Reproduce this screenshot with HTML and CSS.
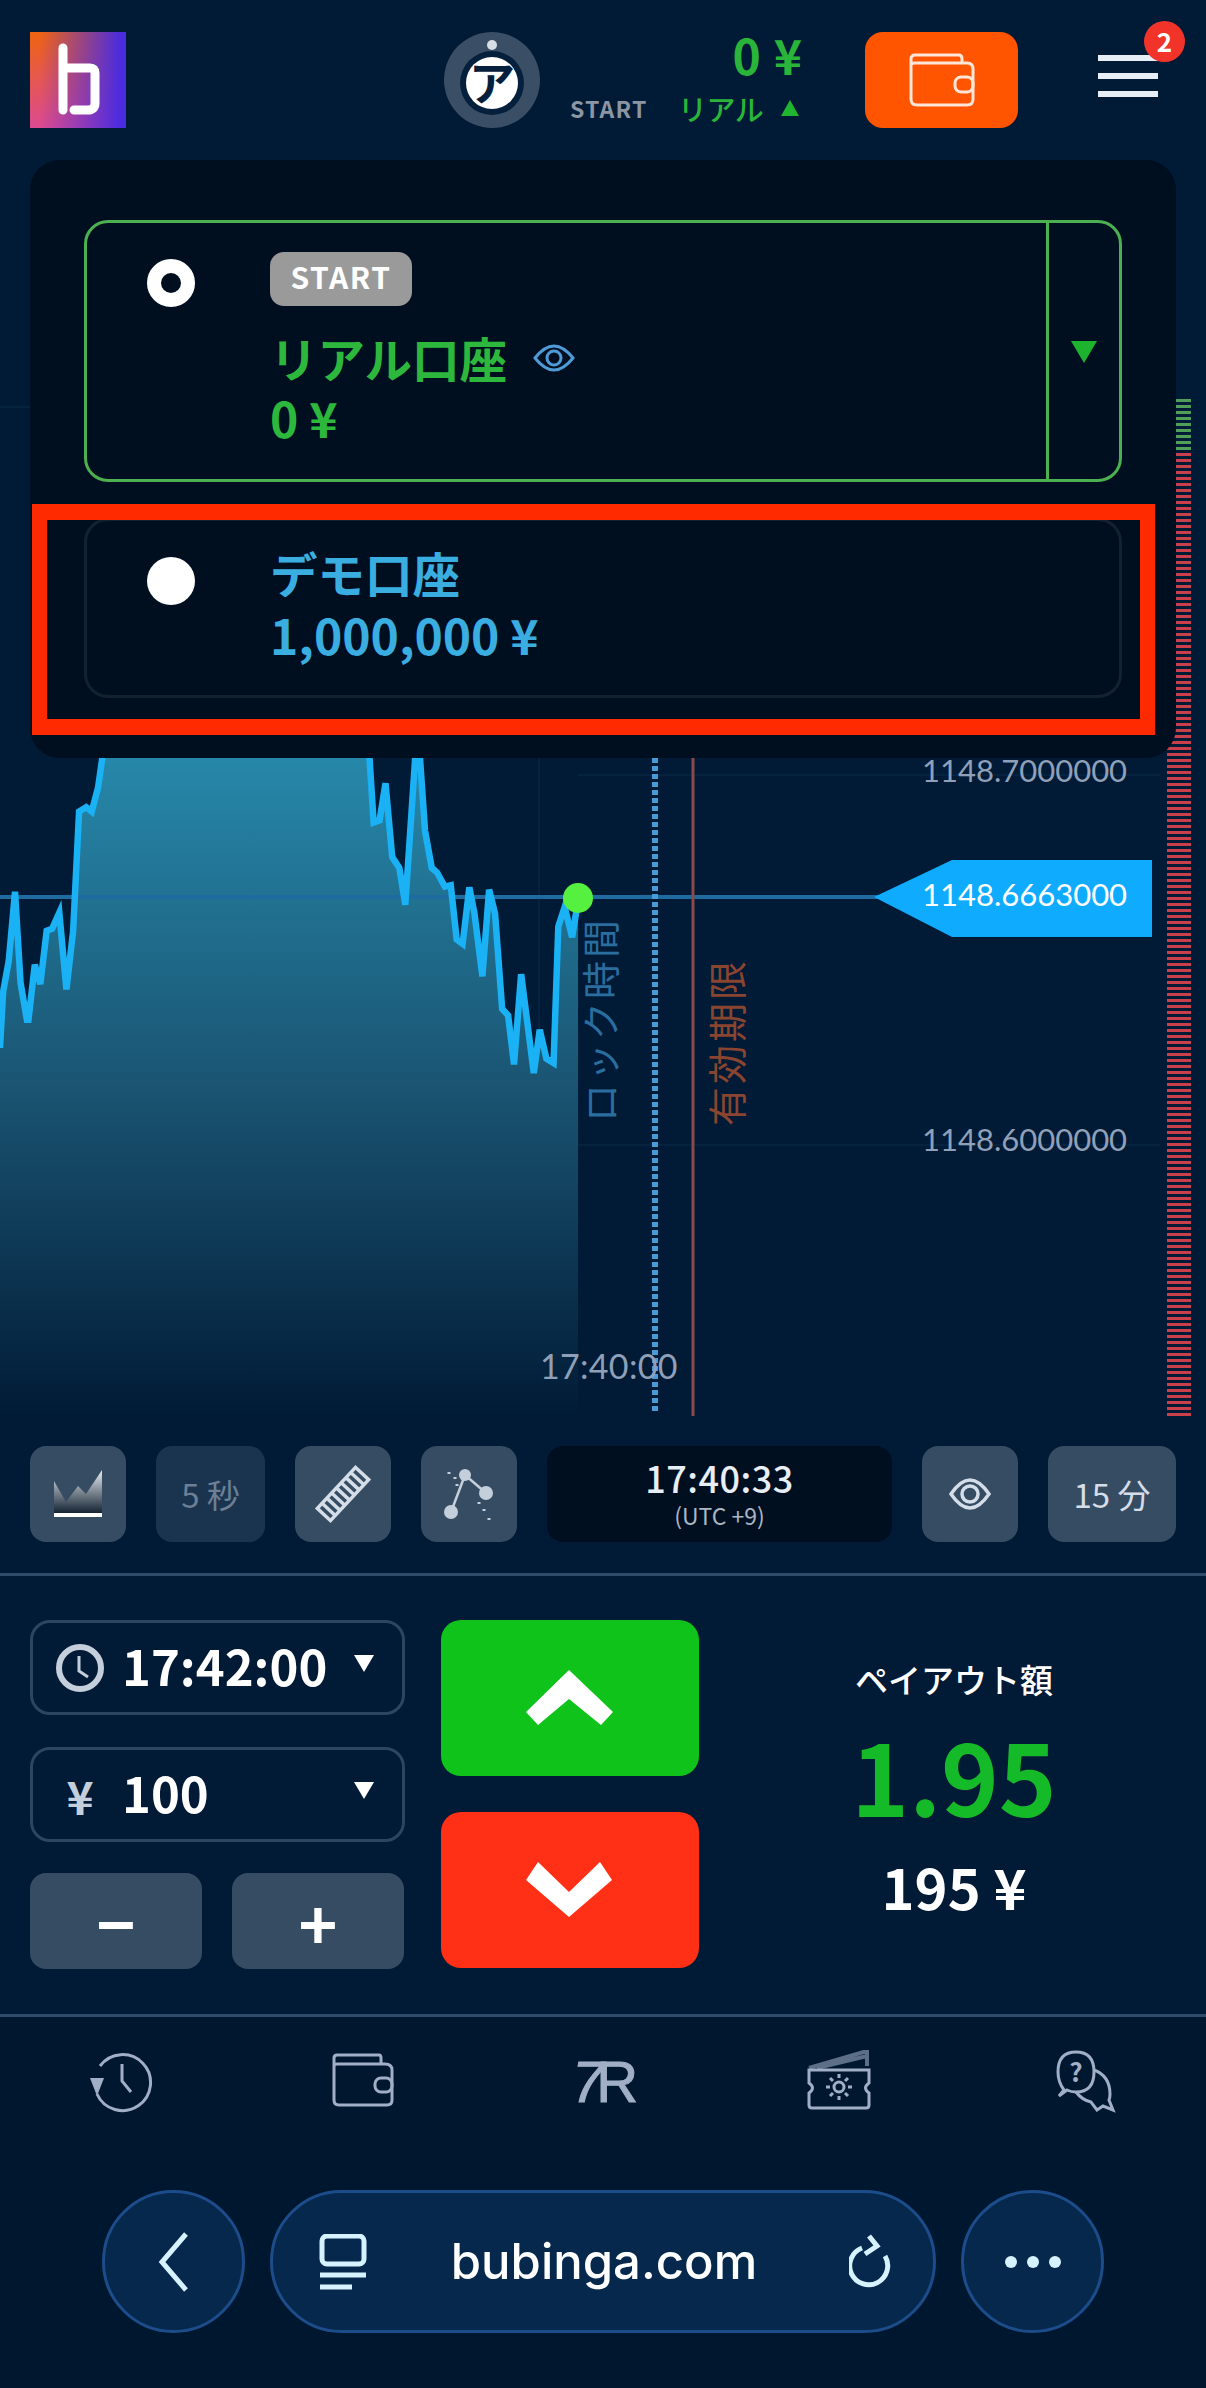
FILE: index.html
```html
<!DOCTYPE html>
<html lang="ja">
<head>
<meta charset="utf-8">
<title>bubinga</title>
<link rel="stylesheet" href="styles.css">
</head>
<body>
<header class="topbar">
  <div class="logo">
    <svg width="96" height="96" viewBox="0 0 96 96"><path class="logo-b" d="M33 16V78M33 36H60Q65 36 65 41V71Q65 78 58 78H44"/></svg>
  </div>
  <svg class="avatar" width="96" height="96" viewBox="0 0 96 96">
    <circle class="av-ring" cx="48" cy="48" r="48"/>
    <circle class="av-dot" cx="48" cy="13" r="5"/>
    <circle class="av-dark" cx="48" cy="51" r="32"/>
    <circle class="av-white" cx="48" cy="51" r="26"/>
    <text class="av-letter" x="48" y="68" text-anchor="middle">ア</text>
  </svg>
  <div class="account">
    <div class="account-amount">0 ¥</div>
    <div class="account-row">
      <span class="account-tag">START</span>
      <span class="account-kind">リアル</span>
      <span class="tri-up"></span>
    </div>
  </div>
  <button class="wallet-btn">
    <svg width="66" height="54" viewBox="0 0 66 54"><path class="wallet-line" d="M2 12V6Q2 2 6 2H50Q53 2 53 6V10M2 12Q2 10 6 10H58Q64 10 64 16V46Q64 52 58 52H8Q2 52 2 46Z"/><rect class="wallet-line" x="46" y="24" width="18" height="15" rx="6"/></svg>
  </button>
  <div class="menu">
    <span class="menu-bar"></span><span class="menu-bar"></span><span class="menu-bar"></span>
    <span class="badge">2</span>
  </div>
</header>

<main class="chart">
  <svg class="chart-svg" width="1206" height="1286" viewBox="0 160 1206 1286">
    <defs>
      <linearGradient id="areaFill" x1="0" y1="0" x2="0" y2="1">
        <stop offset="0" stop-color="#2789ab"/>
        <stop offset=".5" stop-color="#1a5573"/>
        <stop offset="1" stop-color="#011b36"/>
      </linearGradient>
    </defs>
    <line class="grid" x1="0" y1="407" x2="1160" y2="407"/>
    <line class="grid" x1="578" y1="775" x2="1160" y2="775"/>
    <line class="grid" x1="578" y1="1145" x2="1160" y2="1145"/>
    <line class="grid" x1="539" y1="758" x2="539" y2="1416"/>
    <g transform="translate(0,740) scale(.3954,.4337)">
      <path fill="url(#areaFill)" d="M0 710L8 580L22 510L38 350L52 560L68 645L72 645L88 518L102 563L118 440L132 435L150 398L168 575L185 440L200 165L218 155L232 165L248 110L262 20L933 20L945 190L960 185L975 100L992 270L1010 295L1025 380L1056 20L1075 210L1092 295L1105 305L1125 338L1140 335L1155 460L1170 470L1187 340L1200 400L1220 545L1237 345L1252 400L1270 620L1285 635L1300 748L1318 540L1350 768L1365 668L1382 735L1400 745L1412 430L1428 385L1447 455L1462 370L1462 1559L0 1559Z"/>
    </g>
    <line class="price-line" x1="0" y1="897" x2="880" y2="897"/>
    <g transform="translate(0,740) scale(.3954,.4337)">
      <path class="trace" d="M0 710L8 580L22 510L38 350L52 560L68 645L72 645L88 518L102 563L118 440L132 435L150 398L168 575L185 440L200 165L218 155L232 165L248 110L262 20M933 20L945 190L960 185L975 100L992 270L1010 295L1025 380L1056 -40L1075 210L1092 295L1105 305L1125 338L1140 335L1155 460L1170 470L1187 340L1200 400L1220 545L1237 345L1252 400L1270 620L1285 635L1300 748L1318 540L1350 768L1365 668L1382 735L1400 745L1412 430L1428 385L1447 455L1462 370"/>
    </g>
    <line class="lock-line" x1="655" y1="758" x2="655" y2="1414"/>
    <line class="exp-line" x1="693" y1="758" x2="693" y2="1416"/>
    <circle class="dot" cx="578" cy="898" r="15"/>
    <text class="lock-label" transform="translate(615 1122) rotate(-90)">ロック時間</text>
    <text class="exp-label" transform="translate(742 1126) rotate(-90)">有効期限</text>
    <polygon class="price-tag" points="874,897 952,860 1152,860 1152,937 952,937"/>
    <text class="axis" x="922" y="782">1148.7000000</text>
    <text class="axis axis-now" x="922" y="906">1148.6663000</text>
    <text class="axis" x="922" y="1151">1148.6000000</text>
    <text class="axis axis-time" x="540" y="1379">17:40:00</text>
    <line class="depth-up" x1="1179" y1="399" x2="1179" y2="453"/>
    <line class="depth-down" x1="1179" y1="453" x2="1179" y2="1416"/>
  </svg>

  <section class="accounts">
    <div class="card card-real">
      <span class="radio radio-on"></span>
      <div class="card-body">
        <span class="tag">START</span>
        <div class="card-title title-real">リアル口座
          <svg class="eye-small" width="42" height="30" viewBox="0 0 42 30"><path d="M2 15Q21 -9 40 15Q21 39 2 15Z"/><circle cx="21" cy="15" r="7"/></svg>
        </div>
        <div class="card-amount title-real">0 ¥</div>
      </div>
      <div class="card-side"><span class="tri-down-green"></span></div>
    </div>
    <div class="card card-demo">
      <span class="radio"></span>
      <div class="card-body">
        <div class="card-title title-demo">デモ口座</div>
        <div class="card-amount title-demo">1,000,000 ¥</div>
      </div>
    </div>
  </section>
  <div class="highlight"></div>
</main>

<section class="tools">
  <div class="tool">
    <svg width="52" height="52" viewBox="0 0 52 52">
      <defs><linearGradient id="miniFill" x1="0" y1="0" x2="0" y2="1"><stop offset="0" stop-color="#e8edf3"/><stop offset="1" stop-color="#10202f"/></linearGradient></defs>
      <path fill="url(#miniFill)" d="M2 13L14 34L26 18L34 26L50 2V46H2Z"/><rect class="mini-base" x="2" y="45" width="48" height="4"/>
    </svg>
  </div>
  <div class="tool tool-dim">5 秒</div>
  <div class="tool">
    <svg width="64" height="64" viewBox="0 0 64 64"><g class="tool-line" transform="rotate(-47 32 32)"><rect x="4" y="23" width="56" height="18"/><path d="M11 23V41M18 23V41M25 23V41M32 23V41M39 23V41M46 23V41M53 23V41"/></g></svg>
  </div>
  <div class="tool">
    <svg width="64" height="64" viewBox="0 0 64 64">
      <path class="tool-line thin" d="M28 13L49 31M28 13L14 50"/>
      <circle class="tool-fill" cx="28" cy="13" r="6"/><circle class="tool-fill" cx="49" cy="31" r="7"/><circle class="tool-fill" cx="14" cy="50" r="7"/>
      <path class="tool-dots" d="M12 10V12M18 15V17M20 22V24M42 40V42M47 47V49M52 56V58"/>
    </svg>
  </div>
  <div class="clock">
    <div class="clock-time">17:40:33</div>
    <div class="clock-zone">(UTC +9)</div>
  </div>
  <div class="tool">
    <svg width="44" height="44" viewBox="0 0 44 44"><path class="tool-line" d="M3 22Q22 -6 41 22Q22 50 3 22Z"/><circle class="tool-line" cx="22" cy="22" r="8"/></svg>
  </div>
  <div class="tool tool-wide">15 分</div>
</section>

<section class="trade">
  <div class="inputs">
    <div class="field">
      <svg class="field-icon" width="48" height="48" viewBox="0 0 48 48"><circle class="clock-ring" cx="24" cy="24" r="21"/><path class="clock-hand" d="M23 12V27L32 33"/></svg>
      <span class="field-value">17:42:00</span>
      <span class="tri-down"></span>
    </div>
    <div class="field">
      <span class="field-icon field-yen">¥</span>
      <span class="field-value">100</span>
      <span class="tri-down"></span>
    </div>
    <div class="steppers">
      <div class="stepper">−</div>
      <div class="stepper">+</div>
    </div>
  </div>
  <div class="actions">
    <button class="action action-up"><svg width="90" height="56" viewBox="0 0 90 56"><polygon points="44,0 88,42 76,55 44,29 13,55 1,42"/></svg></button>
    <button class="action action-down"><svg width="90" height="56" viewBox="0 0 90 56"><polygon points="1,18 13,0 44,30 75,0 87,18 44,55"/></svg></button>
  </div>
  <div class="payout">
    <div class="payout-label">ペイアウト額</div>
    <div class="payout-rate">1.95</div>
    <div class="payout-sum">195 ¥</div>
  </div>
</section>

<nav class="tabs">
  <div class="tab">
    <svg width="64" height="64" viewBox="0 0 64 64"><path class="tab-line" d="M7 44A28 28 0 1 0 10 16"/><path class="tab-line" d="M32 14V31L41 42"/><polygon class="tab-fill" points="0,28 14,28 7,46"/></svg>
  </div>
  <div class="tab">
    <svg width="64" height="64" viewBox="0 0 64 64"><path class="tab-line" d="M3 16V8Q3 5 6 5H48Q50 5 50 8V14M3 16Q3 14 6 14H54Q61 14 61 20V50Q61 55 56 55H8Q3 55 3 50Z"/><rect class="tab-line" x="44" y="28" width="17" height="14" rx="6"/></svg>
  </div>
  <div class="tab tab-text"><i class="tab-seven">7</i>R</div>
  <div class="tab tab-ticket">
    <svg width="64" height="64" viewBox="0 0 64 64"><path class="tab-dim" d="M2 18L60 1V16M10 18L60 6"/><path class="tab-line" d="M2 20H62V33Q55 38 62 43V55Q62 58 59 58H5Q2 58 2 55V43Q9 38 2 33Z"/><circle class="tab-line" cx="32" cy="37" r="5"/><path class="tab-line" d="M32 24V28M32 46V50M19 37H23M41 37H45M23 28L26 31M41 28L38 31M23 46L26 43M41 46L38 43"/></svg>
  </div>
  <div class="tab tab-chat">
    <svg width="64" height="64" viewBox="0 0 64 64"><path class="tab-line" d="M8 40Q2 32 2 22Q2 2 20 2Q38 2 38 22Q38 42 20 42Q15 42 11 40L3 46Z"/><path class="tab-line" d="M38 20Q54 26 54 44Q54 48 53 50L57 60L47 56L41 60L35 52Q26 50 20 42"/><text class="tab-q" x="20" y="32" text-anchor="middle">?</text></svg>
  </div>
</nav>

<footer class="browser">
  <div class="round">
    <svg width="40" height="60" viewBox="0 0 40 60"><path class="br-line" d="M32 2L8 30L32 58"/></svg>
  </div>
  <div class="address">
    <svg width="48" height="56" viewBox="0 0 48 56"><rect class="br-line" x="3" y="2" width="42" height="28" rx="5"/><path class="br-line" d="M1 41H47"/><path class="br-line" d="M1 53H33"/></svg>
    <span class="url">bubinga.com</span>
    <svg width="44" height="56" viewBox="0 0 44 56"><path class="br-line" d="M13 14A19 19 0 1 0 36 22"/><path class="br-line" d="M20 2L28 12L16 20"/></svg>
  </div>
  <div class="round round-more"><span class="pip"></span><span class="pip"></span><span class="pip"></span></div>
</footer>
</body>
</html>
```

FILE: styles.css
```css
* { box-sizing: border-box; }
html, body { margin: 0; padding: 0; }
body {
  width: 1206px;
  height: 2388px;
  overflow: hidden;
  background: #011a35;
  color: #fff;
  font-family: "Noto Sans CJK JP", "Inter", sans-serif;
  display: flex;
  flex-direction: column;
}
button { border: 0; padding: 0; font: inherit; }
svg { display: block; }

/* top bar */
.topbar { height: 160px; padding: 32px 30px 0; display: flex; align-items: flex-start; flex: none; }
.logo {
  width: 96px; height: 96px; flex: none;
  background: linear-gradient(90deg, rgba(74,43,224,0) 10%, #4a2be0 95%), linear-gradient(180deg, #ef6410, #dc4a92);
}
.logo-b { fill: none; stroke: #fff; stroke-width: 9; stroke-linecap: round; }
.avatar { margin-left: 318px; flex: none; }
.av-ring { fill: #3a4f66; }
.av-dot { fill: #d8dee6; }
.av-dark { fill: #05203c; }
.av-white { fill: #fff; }
.av-letter { font-size: 46px; font-weight: 700; fill: #05203c; }
.account { margin-left: 30px; width: 233px; flex: none; }
.account-amount { height: 49px; line-height: 44px; font-size: 48px; font-weight: 700; color: #2ab53a; text-align: right; letter-spacing: 1px; }
.account-row { margin-top: 7px; display: flex; align-items: center; height: 40px; white-space: nowrap; }
.account-tag { width: 80px; flex: none; font-size: 23px; font-weight: 700; color: #8c96a3; letter-spacing: 1.2px; }
.account-kind { margin-left: 28px; font-size: 29px; font-weight: 500; color: #2ab53a; letter-spacing: -.5px; }
.tri-up { margin-left: 18px; width: 0; height: 0; border-left: 9px solid transparent; border-right: 9px solid transparent; border-bottom: 16px solid #1fb52f; flex: none; }
.wallet-btn { margin-left: 62px; width: 153px; height: 96px; background: #ff5500; border-radius: 18px; display: flex; align-items: center; justify-content: center; flex: none; }
.wallet-line { fill: none; stroke: #ffe6d8; stroke-width: 3; }
.menu { position: relative; margin-left: 80px; margin-top: 23px; width: 60px; height: 42px; display: flex; flex-direction: column; justify-content: space-between; flex: none; }
.menu-bar { display: block; height: 6px; background: #e8eef5; }
.badge { position: absolute; left: 46px; top: -34px; width: 41px; height: 41px; border-radius: 50%; background: #f2332a; color: #fff; font-size: 26px; font-weight: 700; line-height: 40px; text-align: center; }

/* chart canvas */
.chart { position: relative; height: 1286px; flex: none; }
.chart-svg { position: absolute; left: 0; top: 0; }
.grid { stroke: #0b2a49; stroke-width: 1; }
.trace { fill: none; stroke: #1ab2f5; stroke-width: 6.5; vector-effect: non-scaling-stroke; stroke-linejoin: miter; }
.price-line { stroke: #1f6a9e; stroke-width: 4; }
.lock-line { stroke: #4a9ad8; stroke-width: 6; stroke-dasharray: 5 3; }
.exp-line { stroke: #8a4a48; stroke-width: 3; }
.dot { fill: #55f040; }
.lock-label { font-size: 38px; fill: #2a6d9f; letter-spacing: 3px; }
.exp-label { font-size: 39px; fill: #8a4530; letter-spacing: 3px; }
.price-tag { fill: #0fabff; }
.axis { font-family: "Lato", sans-serif; font-size: 31px; fill: #8fa0b8; }
.axis-now { fill: #fff; }
.axis-time { font-size: 34px; letter-spacing: .3px; }
.depth-up { stroke: #4f9f58; stroke-width: 24; stroke-dasharray: 3 3; }
.depth-down { stroke: #c9404a; stroke-width: 24; stroke-dasharray: 3 3; }

/* account dropdown */
.accounts {
  position: absolute; left: 30px; top: 0; width: 1146px; height: 598px;
  padding: 60px 54px 0;
  background: #000f20; border-radius: 30px;
  display: flex; flex-direction: column; gap: 36px;
}
.card { position: relative; width: 1038px; border-radius: 24px; display: flex; flex: none; }
.card-real { height: 262px; border: 3px solid #4caf50; }
.card-demo { height: 180px; border: 3px solid #14222f; }
.radio { margin: 36px 0 0 60px; width: 48px; height: 48px; border-radius: 50%; background: #fff; flex: none; }
.radio-on { border: 14px solid #fff; background: #000f20; }
.card-body { margin-left: 75px; flex: 1; }
.card-real .card-body { padding-top: 29px; }
.card-demo .card-body { padding-top: 22px; }
.tag { display: block; width: 142px; height: 54px; line-height: 48px; border-radius: 14px; background: #9a9a9a; color: #fff; font-size: 30px; font-weight: 700; text-align: center; letter-spacing: 1.5px; }
.card-title { display: flex; align-items: center; height: 60px; font-size: 47.5px; font-weight: 700; line-height: 60px; }
.card-real .card-title { margin-top: 22px; }
.eye-small { margin-left: 26px; fill: none; stroke: #4e9bd8; stroke-width: 3; }
.card-amount { font-size: 48px; font-weight: 700; line-height: 54px; }
.card-real .card-amount { margin-top: 2px; }
.card-demo .card-amount { margin-top: 4px; }
.title-real { color: #2db83d; }
.title-demo { color: #3aaee0; }
.card-side { width: 73px; border-left: 3px solid #4caf50; display: flex; justify-content: center; padding-top: 118px; flex: none; }
.tri-down-green { width: 0; height: 0; border-left: 13px solid transparent; border-right: 13px solid transparent; border-top: 22px solid #1db32e; }
.highlight { position: absolute; left: 32px; top: 344px; width: 1123px; height: 231px; border-style: solid; border-color: #ff2a00; border-width: 16px 15px; }

/* toolbar */
.tools { flex: none; height: 130px; padding: 0 30px; display: flex; gap: 30px; align-items: flex-start; border-bottom: 3px solid #2f4c6b; }
.tool { width: 96px; height: 96px; flex: none; border-radius: 16px; background: #364c63; display: flex; align-items: center; justify-content: center; font-size: 33px; color: #d5dde8; }
.tool-dim { width: 109px; background: #1a3450; color: #6c7f95; }
.tool-wide { width: 128px; }
.mini-base { fill: #fff; }
.tool-line { fill: none; stroke: #d5dde8; stroke-width: 3.5; }
.tool-line.thin { stroke-width: 2.5; stroke: #c5cfdc; }
.tool-fill { fill: #c5cfdc; }
.tool-dots { stroke: #c5cfdc; stroke-width: 3; }
.clock { width: 345px; height: 96px; flex: none; border-radius: 16px; background: #000f20; text-align: center; padding-top: 10px; }
.clock-time { font-size: 36px; font-weight: 500; line-height: 42px; color: #e8eef5; letter-spacing: .5px; }
.clock-zone { margin-top: 3px; font-size: 23px; line-height: 28px; color: #aab6c4; }

/* trade block */
.trade { flex: none; height: 441px; padding: 44px 0 0 30px; display: flex; align-items: flex-start; border-bottom: 3px solid #2f4c6b; }
.inputs { width: 375px; flex: none; display: flex; flex-direction: column; gap: 32px; }
.field { height: 95px; border: 3px solid #2c4560; border-radius: 20px; display: flex; align-items: center; padding: 0 28px 0 23px; }
.field-icon { width: 48px; flex: none; }
.clock-ring { fill: none; stroke: #c5cfdc; stroke-width: 6; }
.clock-hand { fill: none; stroke: #c5cfdc; stroke-width: 3; }
.field-yen { font-size: 46px; font-weight: 600; line-height: 60px; color: #c5cfdc; text-align: center; }
.field-value { margin: -5px 0 0 18px; flex: 1; font-size: 49px; font-weight: 700; line-height: 60px; color: #fff; }
.tri-down { width: 0; height: 0; border-left: 10px solid transparent; border-right: 10px solid transparent; border-top: 17px solid #fff; margin-top: -8px; flex: none; }
.steppers { display: flex; gap: 30px; margin-top: -1px; }
.stepper { width: 172px; height: 96px; border-radius: 16px; background: #364c63; display: flex; align-items: center; justify-content: center; font-size: 66px; font-weight: 600; line-height: 1; color: #fff; }
.actions { margin-left: 36px; width: 258px; flex: none; display: flex; flex-direction: column; gap: 36px; }
.action { height: 156px; border-radius: 20px; display: flex; align-items: center; justify-content: center; }
.action polygon { fill: #fff; }
.action-up { background: #10c31b; }
.action-down { background: #ff3015; }
.payout { width: 400px; margin-left: 55px; padding-top: 36px; flex: none; text-align: center; }
.payout-label { font-size: 33px; font-weight: 500; line-height: 46px; }
.payout-rate { margin-top: 17px; font-size: 98px; font-weight: 700; line-height: 110px; color: #15ba28; }
.payout-sum { margin-top: 27px; font-size: 56px; font-weight: 700; line-height: 60px; }

/* bottom tabs */
.tabs { flex: none; height: 173px; padding: 33px 0 0 90px; display: flex; gap: 177px; align-items: flex-start; background: #001730; }
.tab { width: 64px; flex: none; }
.tab-ticket { margin-left: -6px; }
.tab-chat { margin-left: 8px; }
.tab-line { fill: none; stroke: #a0afc5; stroke-width: 3; }
.tab-dim { fill: none; stroke: #5c6f86; stroke-width: 4; }
.tab-fill { fill: #a0afc5; }
.tab-q { font-size: 26px; font-weight: 600; fill: #a0afc5; }
.tab-text { height: 64px; font-size: 58px; line-height: 64px; color: #a0afc5; font-family: "Liberation Sans", sans-serif; white-space: nowrap; -webkit-text-stroke: 1px #a0afc5; letter-spacing: -2px; }
.tab-seven { letter-spacing: -8px; font-style: italic; }

/* browser bar */
.browser { flex: 1; display: flex; gap: 25px; padding-left: 102px; align-items: flex-start; background: #001730; }
.round { width: 143px; height: 143px; border-radius: 50%; background: #06284d; border: 3px solid #1c4c8a; display: flex; align-items: center; justify-content: center; flex: none; gap: 10px; }
.address { width: 666px; height: 143px; border-radius: 72px; background: #06284d; border: 3px solid #1c4c8a; display: flex; align-items: center; justify-content: space-between; padding: 0 40px 0 46px; flex: none; }
.url { margin-right: 8px; font-family: "Inter", sans-serif; font-size: 49px; font-weight: 500; color: #fff; }
.br-line { fill: none; stroke: #d6f2ff; stroke-width: 5; }
.pip { width: 12px; height: 12px; border-radius: 50%; background: #d6f2ff; }
```
